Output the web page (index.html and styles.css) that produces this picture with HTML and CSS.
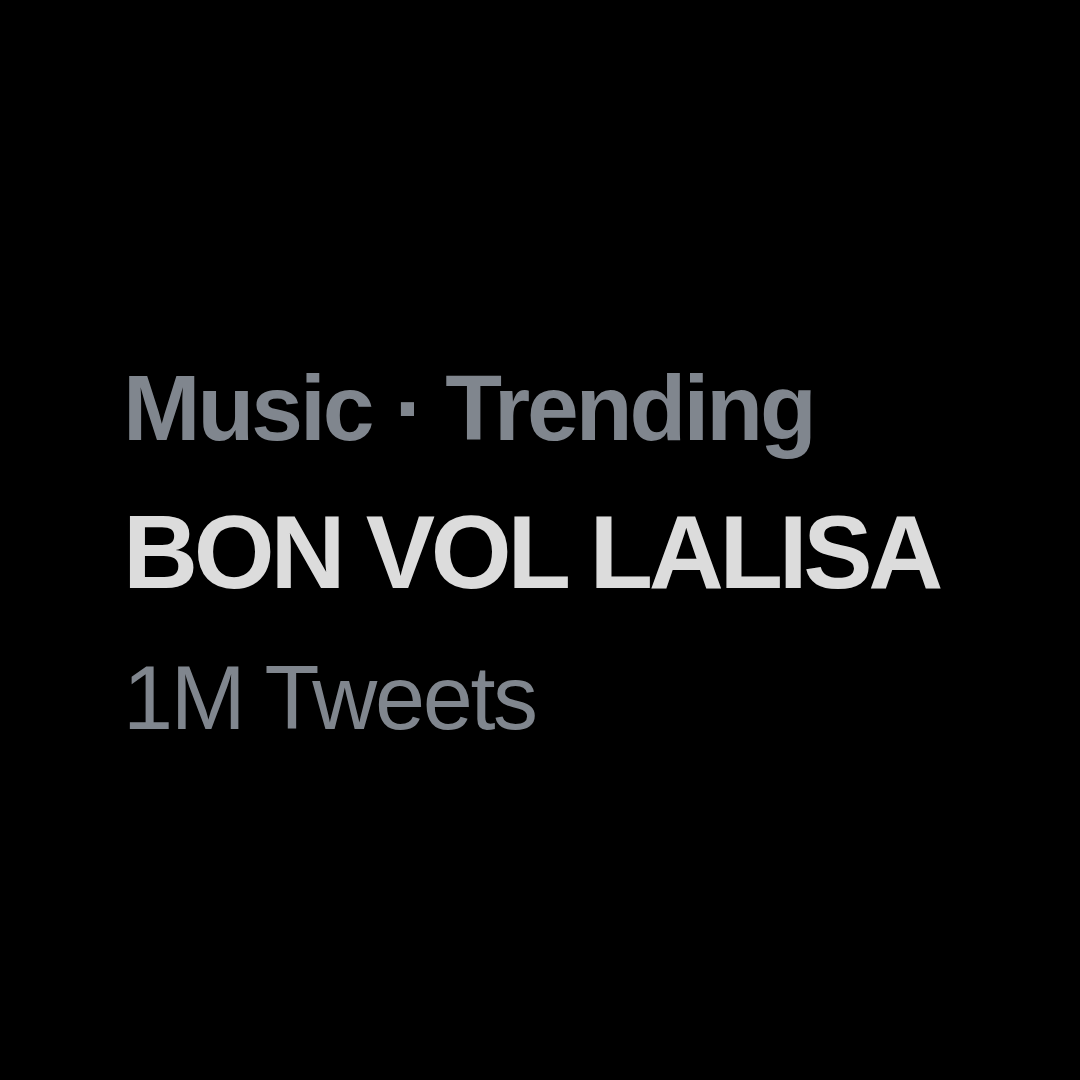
FILE: index.html
```html
<!DOCTYPE html>
<html>
<head>
<meta charset="utf-8">
<link rel="stylesheet" href="styles.css">
</head>
<body>
<div class="trend">
  <div class="meta">Music · Trending</div>
  <div class="title">BON VOL LALISA</div>
  <div class="count">1M Tweets</div>
</div>
</body>
</html>
```
FILE: styles.css
```css
html, body {
  margin: 0;
  padding: 0;
  background: #000;
  width: 1080px;
  height: 1080px;
  overflow: hidden;
}
.trend {
  display: flex;
  flex-direction: column;
  padding: 338px 0 0 123px;
  font-family: "Liberation Sans", Arial, sans-serif;
  white-space: nowrap;
}
.meta {
  font-size: 93px;
  line-height: 140px;
  font-weight: 700;
  letter-spacing: -3px;
  color: #80868e;
}
.title {
  font-size: 104px;
  line-height: 148px;
  font-weight: 700;
  letter-spacing: -4.3px;
  color: #dcdcdc;
}
.count {
  font-size: 90px;
  line-height: 145px;
  font-weight: 400;
  letter-spacing: -2.3px;
  color: #80868e;
}
```
